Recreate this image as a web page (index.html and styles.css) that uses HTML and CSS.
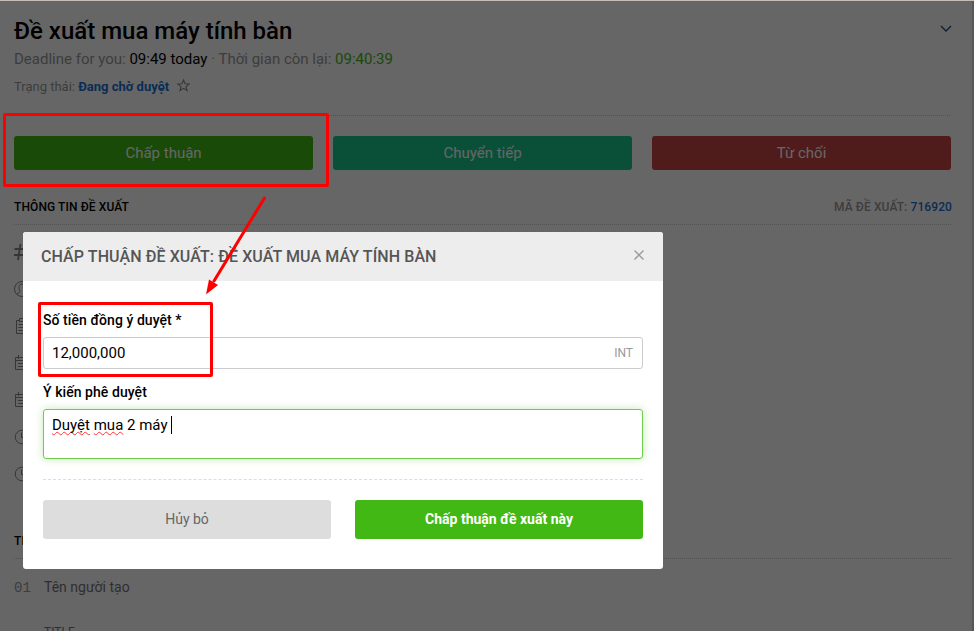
FILE: index.html
```html
<!DOCTYPE html>
<html lang="vi">
<head>
    <meta charset="UTF-8">
    <meta name="viewport" content="width=device-width, initial-scale=1.0">
    <title>Đề xuất mua máy tính bàn</title>
    <link rel="stylesheet" href="styles.css">
</head>
<body>

<main class="page">
    <header class="head">
        <div>
            <h1>Đề xuất mua máy tính bàn</h1>
            <p class="deadline">Deadline for you: <b>09:49 today</b> · Thời gian còn lại: <em>09:40:39</em></p>
            <p class="status">Trạng thái: <a href="#">Đang chờ duyệt</a>
                <svg class="star" viewBox="0 0 12 12"><path d="M6 .9l1.4 3.5 3.8.2-2.9 2.4 1 3.7L6 8.6l-3.3 2.1 1-3.7L.8 4.6l3.8-.2z"/></svg>
            </p>
        </div>
        <svg class="chevron" viewBox="0 0 12 8"><path d="M1 1l5 5 5-5"/></svg>
    </header>

    <div class="actions">
        <button class="approve">Chấp thuận</button>
        <button class="forward">Chuyển tiếp</button>
        <button class="reject">Từ chối</button>
    </div>

    <div class="section-title">
        <h2>THÔNG TIN ĐỀ XUẤT</h2>
        <span>MÃ ĐỀ XUẤT: <a href="#">716920</a></span>
    </div>

    <ul class="info">
        <li><svg viewBox="0 0 18 18"><path class="bold" d="M6.500 1L4 17M12.500 1L10 17M.5 6H16M0 12H15"/></svg></li>
        <li><svg viewBox="0 0 18 18"><circle cx="8" cy="9" r="7.500"/><path d="M3 14c2-1 3-2 3-3-2-3-1-7 2-7s4 4 2 7c0 1 1 2 3 3"/></svg></li>
        <li><svg viewBox="0 0 18 18"><path d="M5 3.500H2.500V16.500H14.500V3.500H12M5.500 1.500H11.500V4.500H5.500zM4.500 7.500H12.500M4.500 10.500H12.500M4.500 13.500H12.500"/></svg></li>
        <li><svg viewBox="0 0 18 18"><path d="M1.500 3.500H15.500V15.500H1.500zM1.500 6.500H15.500M4.500 1V5M12.500 1V5M4 9.500H13M4 12.500H13"/></svg></li>
        <li><svg viewBox="0 0 18 18"><path d="M1.500 3.500H15.500V15.500H1.500zM1.500 6.500H15.500M4.500 1V5M12.500 1V5M4 9.500H13M4 12.500H13"/></svg></li>
        <li><svg viewBox="0 0 18 18"><circle cx="8" cy="9" r="6.800"/><path d="M7.500 4.500V9.500H11"/></svg></li>
        <li><svg viewBox="0 0 18 18"><circle cx="8" cy="9" r="6.800"/><path d="M7.500 4.500V9.500H11"/></svg></li>
    </ul>

    <div class="section-title">
        <h2>THÔNG TIN CHI TIẾT</h2>
    </div>

    <div class="detail">
        <span class="num">01</span>
        <div>
            <p>Tên người tạo</p>
            <small>TITLE</small>
        </div>
    </div>
</main>

<div class="overlay">
    <form class="modal">
        <div class="modal-head">
            <h3>CHẤP THUẬN ĐỀ XUẤT: ĐỀ XUẤT MUA MÁY TÍNH BÀN</h3>
            <svg viewBox="0 0 10 10"><path d="M.5.5l9 9M9.500.5l-9 9"/></svg>
        </div>
        <div class="modal-body">
            <label>Số tiền đồng ý duyệt *</label>
            <div class="field"><span>12,000,000</span><small>INT</small></div>
            <label>Ý kiến phê duyệt</label>
            <div class="field area"><span><u>Duyệt</u> <u>mua</u> 2 máy <i class="caret"></i></span></div>
            <div class="buttons">
                <button type="button" class="cancel">Hủy bỏ</button>
                <button type="button" class="submit">Chấp thuận đề xuất này</button>
            </div>
        </div>
    </form>
</div>

<div class="mark mark-button"></div>
<div class="mark mark-amount"></div>
<svg class="arrow" viewBox="0 0 70 110">
    <path class="line" d="M64.500 18L14 101"/>
    <path class="tip" d="M6 114.500L9 99.500L18 105z"/>
</svg>

</body>
</html>
```
FILE: styles.css
```css
* {
    box-sizing: border-box;
}

body {
    margin: 0;
    height: 631px;
    overflow: hidden;
    font-family: Roboto, 'Liberation Sans', sans-serif;
    color: #000;
    background: #fff;
}

h1, h2, h3, p, ul {
    margin: 0;
    padding: 0;
}

a {
    color: #1c6fd0;
    text-decoration: none;
}

button {
    border: none;
    border-radius: 3px;
    font-family: inherit;
}

svg {
    fill: none;
    stroke: #888;
}

.page {
    height: 631px;
    padding: 14px 21px 0 14px;
    border-right: 2px solid #ddd;
    overflow: hidden;
}

.head {
    display: flex;
    justify-content: space-between;
    height: 102px;
    margin-right: 1px;
    border-bottom: 1px dotted #ccc;
}

h1 {
    font-size: 24px;
    font-weight: 500;
    line-height: 34px;
}

.deadline {
    font-size: 15px;
    line-height: 22px;
    color: #999;
}

.deadline b {
    font-weight: 400;
    color: #000;
}

.deadline em {
    font-style: normal;
    color: #42b814;
}

.status {
    margin-top: 7px;
    font-size: 13px;
    line-height: 20px;
    color: #999;
}

.status a {
    font-weight: 700;
}

.star {
    width: 13px;
    height: 13px;
    margin-left: 5px;
    vertical-align: -1px;
}

.chevron {
    width: 12px;
    height: 8px;
    margin-top: 11px;
    margin-right: -2px;
    stroke: #1f4b78;
    stroke-width: 1.3;
}

.actions {
    display: grid;
    grid-template-columns: repeat(3, 299px);
    gap: 20px;
    margin-top: 20px;
}

.actions button {
    height: 34px;
    padding: 0;
    font-size: 15px;
    color: #fff;
}

.approve {
    background: #42b814;
}

.forward {
    background: #1bc88c;
}

.reject {
    background: #c54545;
}

.section-title {
    display: flex;
    justify-content: space-between;
    height: 35px;
    margin-top: 20px;
    border-bottom: 1px dotted #ccc;
    font-size: 12px;
    font-weight: 500;
    line-height: 34px;
    letter-spacing: 0.1px;
    color: #999;
}

.section-title span {
    margin-right: -1px;
}

.section-title h2 {
    font-size: 12px;
    font-weight: 500;
    color: #000;
}

.info {
    height: 279px;
    padding-top: 8px;
    list-style: none;
}

.info li {
    display: flex;
    align-items: center;
    height: 37px;
}

.info svg {
    width: 18px;
    height: 18px;
}

.info .bold {
    stroke-width: 1.8;
}

.detail {
    display: flex;
    padding-top: 18px;
    font-size: 14px;
    line-height: 20px;
    color: #777;
}

.num {
    width: 30px;
    padding-top: 1px;
    font-family: 'Liberation Mono', monospace;
    color: #999;
}

.detail small {
    display: block;
    margin-top: 27px;
    font-size: 12px;
    line-height: 16px;
}

.overlay {
    position: absolute;
    inset: 0;
    padding: 231px 0 0 23px;
    border-top: 1px solid #c8bcb4;
    background: rgba(0, 0, 0, 0.6);
}

.modal {
    width: 640px;
    height: 337px;
    border-radius: 3px;
    overflow: hidden;
    background: #fff;
}

.modal-head {
    display: flex;
    align-items: center;
    justify-content: space-between;
    height: 49px;
    padding: 0 19px 0 18px;
    background: #ededed;
}

.modal-head h3 {
    font-size: 16px;
    font-weight: 500;
    letter-spacing: 0.09px;
    color: #555;
}

.modal-head svg {
    width: 10px;
    height: 10px;
    margin-top: -3px;
    stroke: #999;
    stroke-width: 1.4;
}

.modal-body {
    padding: 28px 20px 0;
}

label {
    display: block;
    height: 28px;
    font-size: 14px;
    font-weight: 500;
    line-height: 22px;
    letter-spacing: 0.06px;
}

.field {
    display: flex;
    justify-content: space-between;
    height: 32px;
    margin-bottom: 12px;
    padding: 0 9px 0 8px;
    border: 1px solid #ccc;
    border-radius: 3px;
    font-size: 15px;
    line-height: 30px;
}

.field small {
    font-size: 12px;
    color: #999;
}

.area {
    height: 50px;
    border-color: #6fcb4d;
    box-shadow: 0 0 8px rgba(66, 184, 20, 0.3);
}

.area u {
    text-decoration: underline wavy #f33 1px;
    text-decoration-skip-ink: none;
    text-underline-offset: 1px;
}

.caret {
    display: inline-block;
    width: 1px;
    height: 18px;
    vertical-align: -4px;
    background: #000;
}

.buttons {
    display: grid;
    grid-template-columns: 1fr 1fr;
    gap: 24px;
    margin-top: 20px;
    padding-top: 20px;
    border-top: 1px dashed #ddd;
}

.buttons button {
    height: 39px;
    padding: 0 0 2px;
    font-size: 14px;
}

.cancel {
    color: #666;
    background: #ddd;
}

.submit {
    font-weight: 700;
    color: #fff;
    background: #42b814;
}

/* red annotations */
.mark {
    position: absolute;
    border: 3px solid #f00;
    border-radius: 2px;
}

.mark-button {
    left: 3px;
    top: 113px;
    width: 326px;
    height: 74px;
}

.mark-amount {
    left: 38px;
    top: 302px;
    width: 175px;
    height: 75px;
}

.arrow {
    position: absolute;
    left: 200px;
    top: 180px;
    width: 70px;
    height: 110px;
    overflow: visible;
}

.arrow .line {
    stroke: #f00;
    stroke-width: 3;
    stroke-linecap: round;
}

.arrow .tip {
    fill: #f00;
    stroke: none;
}
```
